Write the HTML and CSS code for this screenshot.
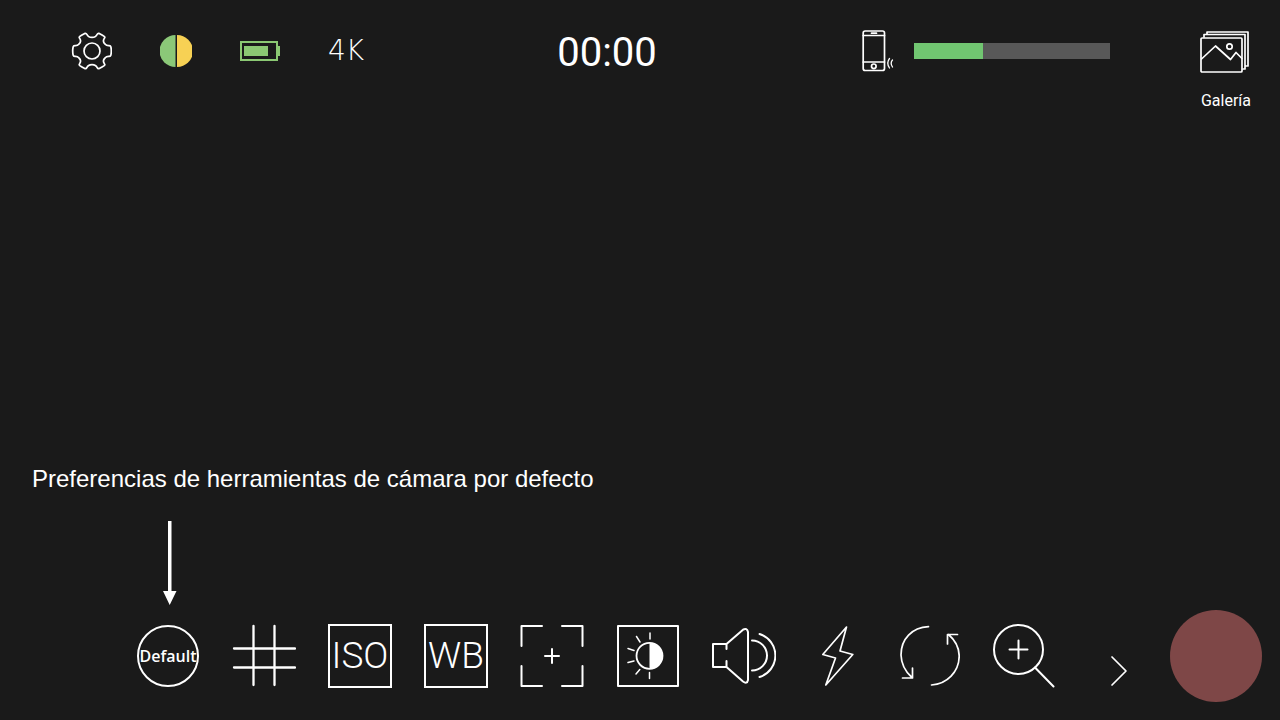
FILE: index.html
```html
<!DOCTYPE html>
<html lang="es">
<head>
<meta charset="utf-8">
<meta name="viewport" content="width=device-width, initial-scale=1">
<title>Cámara</title>
<link rel="stylesheet" href="styles.css">
</head>
<body>
<header class="top">
  <div class="status">
    <div class="status-left">
      <button class="btn" aria-label="Ajustes">
        <svg width="42" height="42" viewBox="-1 0 42 42" class="line fine">
          <circle cx="21" cy="21" r="8"/>
          <path d="M13.800 3.400Q10.600 4.900 8.800 6.300Q7.700 7.200 8.600 8.300Q10.800 11.500 8 14Q6.500 15.800 4 15.600Q2.400 15.500 2.100 17Q1.300 21 2.100 25Q2.400 26.500 4 26.400Q6.500 26.200 8 28Q10.800 30.500 8.600 33.700Q7.700 34.800 8.800 35.700Q10.600 37.100 13.800 38.600Q15.200 39 15.800 37.700Q17 34.600 21 34.600T26.200 37.700Q26.800 39 28.200 38.600Q31.400 37.100 33.200 35.700Q34.300 34.800 33.400 33.700Q31.200 30.500 34 28Q35.500 26.200 38 26.400Q39.600 26.500 39.900 25Q40.700 21 39.900 17Q39.600 15.500 38 15.600Q35.500 15.800 34 14Q31.200 11.500 33.400 8.300Q34.300 7.200 33.200 6.300Q31.400 4.900 28.200 3.400Q26.800 3 26.200 4.300Q25 7.400 21 7.400T15.800 4.300Q15.200 3 13.800 3.400Z"/>
        </svg>
      </button>
      <svg width="32" height="32" viewBox="0 0 32 32" role="img" aria-label="Estado">
        <path fill="#8bc878" d="M15.500 0A16 16 0 0 0 15.500 32Z"/>
        <path fill="#f7d154" d="M17 0A16 16 0 0 1 17 32Z"/>
      </svg>
      <svg width="40" height="20" viewBox="0 0 40 20" role="img" aria-label="Batería">
        <path fill="none" stroke="#8bc873" stroke-width="2" d="M1 1H37V19H1Z"/>
        <path fill="#8bc873" d="M4 5H28V15H4ZM38 5H40V15H38Z"/>
      </svg>
      <span class="resolution">4K</span>
    </div>
    <time class="timer">00:00</time>
    <div class="status-right">
      <svg width="32" height="42" viewBox="0 0 32 42" class="line fine" role="img" aria-label="Teléfono">
        <rect x="1.200" y="1" width="21.300" height="39.500" rx="2"/>
        <path d="M1.200 5.500H22.500M1.200 32H22.500M9.500 3.200H14.500"/>
        <circle cx="11.800" cy="36.300" r="2.300"/>
        <path stroke-width="1.300" d="M27.500 28.500Q24 33 27.500 38M30.500 30Q27.800 33 30.500 37"/>
      </svg>
      <div class="storage" role="progressbar" aria-label="Almacenamiento" aria-valuenow="35" aria-valuemin="0" aria-valuemax="100"><div class="storage-used" style="width:35%"></div></div>
    </div>
  </div>
  <button class="btn gallery">
    <svg width="50" height="44" viewBox="0 0 50 44" class="line fine">
      <rect x="1" y="8" width="41" height="34" rx="1"/>
      <path d="M4 7V4.500H45V39H43M7 4V2H48V36H46"/>
      <path d="M1.500 29L15.500 16L30.500 29.500L36 22.500L42 28.500"/>
      <circle cx="29.500" cy="16.500" r="2.700"/>
    </svg>
    <span>Galería</span>
  </button>
</header>

<main class="bottom">
  <div class="callout">
    <p class="callout-text">Preferencias de herramientas de cámara por defecto</p>
    <svg class="callout-arrow" width="14" height="84" viewBox="0 0 14 84" aria-hidden="true"><path fill="#fff" d="M5 0H8.500V70H13.500L6.700 84L0 70H5Z"/></svg>
  </div>
  <nav class="toolbar">
    <div class="tools">
      <button class="btn tool"><span class="preset">Default</span></button>
      <button class="btn tool" aria-label="Cuadrícula">
        <svg width="64" height="64" viewBox="0 0 64 64" class="line"><path d="M21.500 2V61M42.500 2V61M2 24.500H63M2 43.500H63" stroke-width="2.300"/></svg>
      </button>
      <button class="btn tool boxed">ISO</button>
      <button class="btn tool boxed">WB</button>
      <button class="btn tool" aria-label="Enfoque">
        <svg width="64" height="64" viewBox="0 0 64 64" class="line"><path d="M1.500 22V2H22M42 2H62.500V22M62.500 42V62H42M22 62H1.500V42M25 32H39M32 25V39"/></svg>
      </button>
      <button class="btn tool" aria-label="Exposición">
        <svg width="64" height="64" viewBox="0 0 64 64" class="line"><path d="M2 2H62V62H2Z"/><circle cx="33.500" cy="31.800" r="13" stroke-width="1.800"/><path fill="#fff" d="M33.500 19A13 13 0 0 1 33.500 45Z" stroke="none"/><path stroke-width="1.500" d="M34 9V15M20.500 12.500L24 18M12 24.500L18 26.500M12 38.500L18 37M20 50L23.800 45.500M33.500 48.500V54.500"/></svg>
      </button>
      <button class="btn tool" aria-label="Sonido">
        <svg width="64" height="64" viewBox="0 0 64 64" class="line"><path d="M14.500 25V20H1V43H14.500V37M14.500 20L31 5.700Q35 3.500 36 8V56Q35 60.500 31 57.500L14.500 43M40 16.500A15 15 0 0 1 40 46.500M47.500 10A22.500 22.500 0 0 1 47.500 53"/></svg>
      </button>
      <button class="btn tool narrow" aria-label="Flash">
        <svg width="60" height="64" viewBox="0 0 60 64" class="line fine"><path d="M38.500 3L14.800 30.500L27.500 34L17.800 61L44.800 30.500L32 27Z"/></svg>
      </button>
      <button class="btn tool narrow" aria-label="Cambiar cámara">
        <svg width="60" height="64" viewBox="0 0 60 64" class="line fine"><path d="M28.500 2.700C12 3.500 1 15 1 31Q1.500 44 11.500 53M2.500 54H12.500V44M31.500 61C47 60 59 48 59.200 32Q59 19.500 48.500 10.500M47.500 20V10.500H57.500"/></svg>
      </button>
      <button class="btn tool" aria-label="Zoom">
        <svg width="64" height="64" viewBox="0 0 64 64" class="line"><circle cx="26.500" cy="25.500" r="24.500"/><path d="M43 43.500L61.500 62.500M17.500 25.500H35.500M26.500 16.500V34.500"/></svg>
      </button>
    </div>
    <button class="btn more" aria-label="Más">
      <svg width="18" height="32" viewBox="0 0 18 32" class="line fine"><path d="M2 2L16 16L2 30"/></svg>
    </button>
    <button class="btn record" aria-label="Grabar"></button>
  </nav>
</main>
</body>
</html>
```
FILE: styles.css
```css
* { box-sizing: border-box; }

body {
  margin: 0;
  min-height: 100vh;
  display: flex;
  flex-direction: column;
  justify-content: space-between;
  background: #1a1a1a;
  color: #fff;
  font-family: Roboto, sans-serif;
}

svg { display: block; flex: none; }

.line {
  fill: none;
  stroke: #fff;
  stroke-width: 2;
  stroke-linecap: round;
  stroke-linejoin: round;
}

.fine { stroke-width: 1.7; }

.btn {
  padding: 0;
  border: 0;
  background: none;
  color: inherit;
  font: inherit;
  cursor: pointer;
}

.top {
  display: flex;
  align-items: flex-start;
  gap: 56px;
  padding: 26px 28px 0 70px;
}

.status {
  flex: 1;
  display: grid;
  grid-template-columns: 1fr auto 1fr;
  align-items: center;
}

.status-left {
  display: flex;
  align-items: center;
  gap: 48px;
}

.resolution {
  font: 200 28px/32px "DejaVu Sans", sans-serif;
}

.timer {
  padding-top: 4px;
  font-size: 40px;
  line-height: 46px;
}

.status-right {
  display: flex;
  align-items: center;
  justify-content: flex-end;
  gap: 20px;
  padding-right: 34px;
}

.storage {
  width: 196px;
  height: 16px;
  background: #585858;
}

.storage-used {
  height: 100%;
  background: #71c671;
}

.gallery {
  display: flex;
  flex-direction: column;
  gap: 16px;
  width: 52px;
  padding-top: 4px;
  font-size: 16px;
  line-height: 22px;
}

.callout {
  padding-left: 32px;
}

.callout-text {
  margin: 0 0 28px;
  font: 24px/28px "Liberation Sans", sans-serif;
}

.callout-arrow {
  margin-left: 131px;
}

.toolbar {
  display: flex;
  align-items: center;
  gap: 42px;
  padding: 5px 18px 18px 136px;
}

.tools {
  flex: 1;
  display: flex;
  justify-content: space-between;
  margin-right: 12px;
}

.tool {
  display: flex;
  align-items: center;
  justify-content: center;
  width: 64px;
  height: 64px;
  white-space: nowrap;
}

.narrow { width: 60px; }

.preset {
  display: flex;
  align-items: center;
  justify-content: center;
  width: 62px;
  height: 62px;
  border: 2px solid #fff;
  border-radius: 50%;
  font: 600 16px/20px "Open Sans", sans-serif;
}

.boxed {
  border: 2px solid #fff;
  font-weight: 300;
  font-size: 37px;
  line-height: 44px;
}

.more {
  padding-top: 30px;
}

.record {
  width: 92px;
  height: 92px;
  border-radius: 50%;
  background: #7e4747;
}
```
